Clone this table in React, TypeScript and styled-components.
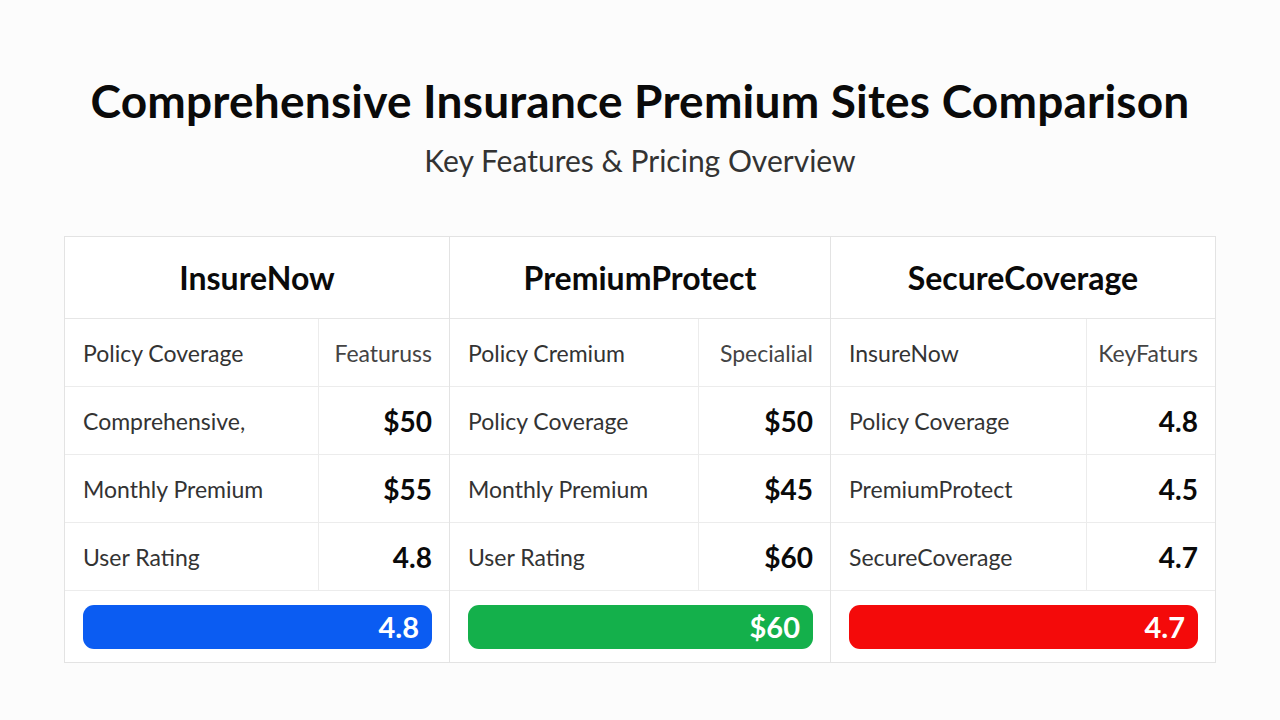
import React from "react";
import styled, { createGlobalStyle } from "styled-components";

const Global = createGlobalStyle`
  html, body { margin: 0; padding: 0; background: #fdfdfd; }
  body { font-family: Lato, "Open Sans", sans-serif; color: #111; }
`;

const Page = styled.div`
  width: 1280px;
  height: 720px;
  box-sizing: border-box;
  padding-top: 71px;
  display: flex;
  flex-direction: column;
  align-items: center;
  background: #fcfcfc;
`;

const Title = styled.h1`
  margin: 0;
  font-size: 46px;
  font-weight: 700;
  line-height: 60px;
  color: #0a0a0a;
  letter-spacing: 0.2px;
`;

const Subtitle = styled.h2`
  margin: 10px 0 0;
  font-size: 30px;
  font-weight: 400;
  line-height: 38px;
  color: #333;
`;

const Table = styled.div`
  margin-top: 57px;
  width: 1150px;
  display: grid;
  grid-template-columns: 384px 381px 385px;
  border: 1px solid #e3e3e3;
  background: #fff;
`;

const Panel = styled.div<{ $split: number }>`
  display: grid;
  grid-template-columns: ${(p) => p.$split}px 1fr;
  grid-template-rows: 82px repeat(4, 68px) 71px;
  border-left: 1px solid #e3e3e3;
  &:first-child { border-left: none; }
`;

const Header = styled.div`
  grid-column: 1 / -1;
  display: flex;
  align-items: center;
  justify-content: center;
  font-size: 32px;
  font-weight: 700;
  color: #0a0a0a;
  border-bottom: 1px solid #e6e6e6;
`;

const Label = styled.div`
  display: flex;
  align-items: center;
  padding-left: 18px;
  font-size: 23px;
  color: #333;
  border-bottom: 1px solid #ececec;
  border-right: 1px solid #ececec;
  white-space: nowrap;
  overflow: hidden;
`;

const Value = styled.div<{ $muted?: boolean }>`
  display: flex;
  align-items: center;
  justify-content: flex-end;
  padding-right: 17px;
  font-size: ${(p) => (p.$muted ? "23px" : "28px")};
  font-weight: ${(p) => (p.$muted ? 400 : 700)};
  color: ${(p) => (p.$muted ? "#444" : "#0a0a0a")};
  border-bottom: 1px solid #ececec;
  white-space: nowrap;
`;

const BarCell = styled.div`
  grid-column: 1 / -1;
  display: flex;
  align-items: center;
  padding: 0 17px 0 18px;
`;

const Bar = styled.div<{ $color: string }>`
  flex: 1;
  height: 44px;
  border-radius: 11px;
  background: ${(p) => p.$color};
  display: flex;
  align-items: center;
  justify-content: flex-end;
  padding-right: 13px;
  color: #fff;
  font-size: 29px;
  font-weight: 700;
`;

type Row = { label: string; value: string; muted?: boolean };
type Site = { name: string; split: number; rows: Row[]; bar: string; color: string };

const sites: Site[] = [
  {
    name: "InsureNow",
    split: 254,
    rows: [
      { label: "Policy Coverage", value: "Featuruss", muted: true },
      { label: "Comprehensive,", value: "$50" },
      { label: "Monthly Premium", value: "$55" },
      { label: "User Rating", value: "4.8" },
    ],
    bar: "4.8",
    color: "#0b5cf2",
  },
  {
    name: "PremiumProtect",
    split: 249,
    rows: [
      { label: "Policy Cremium", value: "Specialial", muted: true },
      { label: "Policy Coverage", value: "$50" },
      { label: "Monthly Premium", value: "$45" },
      { label: "User Rating", value: "$60" },
    ],
    bar: "$60",
    color: "#14b04b",
  },
  {
    name: "SecureCoverage",
    split: 256,
    rows: [
      { label: "InsureNow", value: "KeyFaturs", muted: true },
      { label: "Policy Coverage", value: "4.8" },
      { label: "PremiumProtect", value: "4.5" },
      { label: "SecureCoverage", value: "4.7" },
    ],
    bar: "4.7",
    color: "#f40a0a",
  },
];

export default function App() {
  return (
    <>
      <Global />
      <Page>
        <Title>Comprehensive Insurance Premium Sites Comparison</Title>
        <Subtitle>Key Features &amp; Pricing Overview</Subtitle>
        <Table>
          {sites.map((s) => (
            <Panel key={s.name} $split={s.split}>
              <Header>{s.name}</Header>
              {s.rows.map((r, i) => (
                <React.Fragment key={i}>
                  <Label>{r.label}</Label>
                  <Value $muted={r.muted}>{r.value}</Value>
                </React.Fragment>
              ))}
              <BarCell>
                <Bar $color={s.color}>{s.bar}</Bar>
              </BarCell>
            </Panel>
          ))}
        </Table>
      </Page>
    </>
  );
}
